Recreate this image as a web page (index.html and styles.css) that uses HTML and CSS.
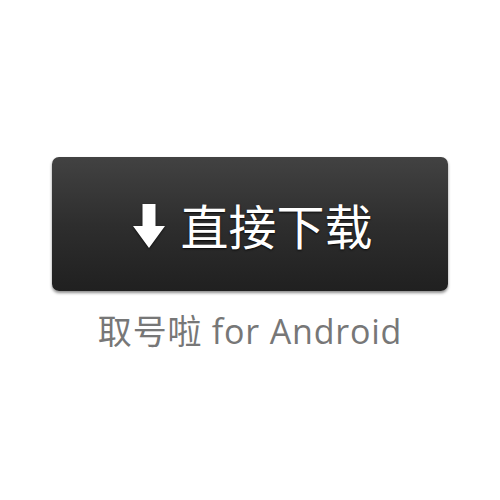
FILE: index.html
```html
<!DOCTYPE html>
<html lang="zh-CN">
<head>
<meta charset="utf-8">
<link rel="stylesheet" href="styles.css">
</head>
<body>
<main class="page">
  <a class="download-btn" href="#">
    <svg class="arrow" width="32" height="44" viewBox="0 0 32 44" aria-hidden="true">
      <polygon points="9.5,0 22.5,0 22.5,22 32,22 16,44 0,22 9.5,22" fill="#fff"/>
    </svg>
    <span class="label">直接下载</span>
  </a>
  <p class="caption">取号啦 for Android</p>
</main>
</body>
</html>
```
FILE: styles.css
```css
html, body {
  margin: 0;
  padding: 0;
  background: #fff;
}
.page {
  width: 500px;
  height: 500px;
  display: flex;
  flex-direction: column;
  align-items: center;
  padding-top: 157px;
  box-sizing: border-box;
}
.download-btn {
  width: 396px;
  height: 134px;
  box-sizing: border-box;
  padding-left: 7px;
  border-radius: 7px;
  background: linear-gradient(to bottom, #424242 0%, #2e2e2e 50%, #202020 100%);
  box-shadow: 0 2px 3px rgba(0,0,0,0.45);
  display: flex;
  align-items: center;
  justify-content: center;
  gap: 15px;
  text-decoration: none;
  margin-left: -1px;
}
.arrow {
  display: block;
  filter: drop-shadow(0 1px 1px rgba(0,0,0,0.6));
  margin-top: 4px;
}
.label {
  font-family: "Noto Sans CJK SC", "Noto Sans", sans-serif;
  font-size: 48px;
  line-height: 1;
  color: #fff;
  text-shadow: 0 1px 2px rgba(0,0,0,0.8);
}
.caption {
  margin: 20px 0 0;
  font-family: "Open Sans", "Noto Sans CJK SC", sans-serif;
  font-size: 34px;
  letter-spacing: 0.8px;
  line-height: 1.2;
  color: #777;
}
```
